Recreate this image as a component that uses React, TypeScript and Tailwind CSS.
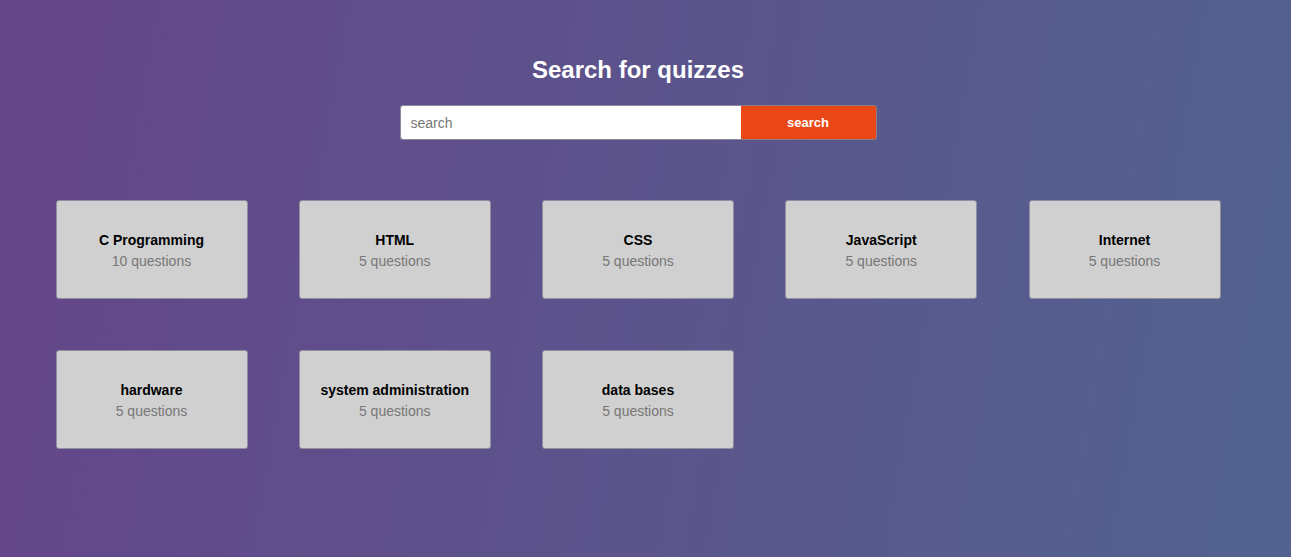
const quizzes = [
  { name: "C Programming", count: 10 },
  { name: "HTML", count: 5 },
  { name: "CSS", count: 5 },
  { name: "JavaScript", count: 5 },
  { name: "Internet", count: 5 },
  { name: "hardware", count: 5 },
  { name: "system administration", count: 5 },
  { name: "data bases", count: 5 },
];

export default function App() {
  return (
    <div className="min-h-[557px] bg-[linear-gradient(100deg,#654589_0%,#52638f_100%)] font-['Liberation_Sans',Arial,sans-serif]">
      <div className="w-[1276px] flex flex-col items-center pt-[56px]">
        <h1 className="text-[24px] leading-[28px] font-bold text-white">Search for quizzes</h1>
        <form className="mt-[21px] flex" onSubmit={(e) => e.preventDefault()}>
          <input
            type="text"
            placeholder="search"
            className="w-[341px] h-[35px] bg-white rounded-l-[3px] border border-[#8a8a9a] border-r-0 px-[10px] text-[14px] text-black placeholder:text-[#777] outline-none"
          />
          <button
            type="submit"
            className="w-[136px] h-[35px] bg-[#e94715] rounded-r-[3px] border border-[#8a7a8a] border-l-0 text-white text-[13px] font-bold"
          >
            search
          </button>
        </form>
      </div>

      <div className="mt-[60px] pl-[55.5px] flex flex-wrap gap-x-[51.25px] gap-y-[51px] w-[1291px]">
        {quizzes.map((q) => (
          <div
            key={q.name}
            className="w-[192px] h-[99px] pt-[2px] bg-[#d0d0d0] border border-[#8f8f9f] rounded-[3px] flex flex-col items-center justify-center"
          >
            <div className="text-[14px] leading-[20px] font-bold text-black">{q.name}</div>
            <div className="text-[14px] leading-[20px] text-[#777] mt-[1px]">{q.count} questions</div>
          </div>
        ))}
      </div>
    </div>
  );
}
